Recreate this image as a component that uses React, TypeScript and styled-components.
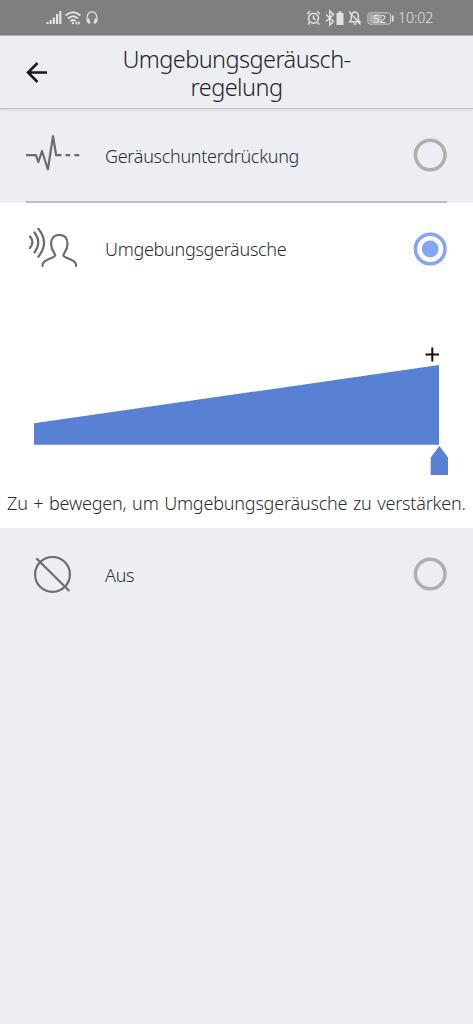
import React, { useState } from "react";
import styled, { createGlobalStyle } from "styled-components";

const GlobalStyle = createGlobalStyle`
  *, *::before, *::after { box-sizing: border-box; }
  body { margin: 0; background: #edeef4; }
`;

const Screen = styled.div`
  display: flex;
  flex-direction: column;
  width: 100%;
  min-height: 100vh;
  background: #edeef4;
  color: #2c2d31;
  font-family: "Noto Sans", "Open Sans", sans-serif;
  font-weight: 300;
`;

const StatusBar = styled.div`
  display: flex;
  align-items: center;
  justify-content: space-between;
  height: 36px;
  padding: 0 38px 0 46px;
  background: #7f7f7f;
  border-bottom: 1px solid #b9b9bb;
`;

const StatusIcons = styled.svg`
  display: block;
  flex: none;
`;

const StatusGroup = styled.div`
  display: flex;
  align-items: center;
  gap: 4px;
`;

const Clock = styled.span`
  color: #e2e2e2;
  font-size: 14.2px;
  line-height: 20px;
  letter-spacing: -0.1px;
  width: 37px;
  white-space: nowrap;
`;

const Header = styled.header`
  display: grid;
  grid-template-columns: 75px 1fr 75px;
  align-items: center;
  height: 73px;
  padding-top: 1px;
  border-bottom: 1px solid #c0c1c5;
  box-shadow: 0 1px 3px rgba(0, 0, 0, 0.1);
`;

const BackButton = styled.button`
  display: flex;
  padding: 0 0 0 26px;
  border: 0;
  background: none;
`;

const Title = styled.h1`
  margin: 0;
  color: #242529;
  font-size: 23.5px;
  font-weight: 300;
  line-height: 28px;
  letter-spacing: -0.57px;
  text-align: center;
  white-space: nowrap;
`;

const Section = styled.section<{ $active?: boolean; $height: number }>`
  height: ${(p) => p.$height}px;
  background: ${(p) => (p.$active ? "#ffffff" : "transparent")};
`;

const Option = styled.button`
  display: grid;
  grid-template-columns: 79px 1fr 34px;
  align-items: center;
  width: 100%;
  height: 92px;
  padding: 0 26px;
  border: 0;
  background: none;
  color: inherit;
  font: inherit;
  text-align: left;
`;

const OptionIcon = styled.svg`
  display: block;
  fill: none;
  stroke: #6c6d70;
  stroke-width: 2.2;
`;

const OptionLabel = styled.span<{ $drop?: number }>`
  padding-top: ${(p) => p.$drop ?? 0}px;
  font-size: 18px;
  line-height: 26px;
  letter-spacing: -0.3px;
  white-space: nowrap;
`;

const RadioMark = styled.svg<{ $checked: boolean }>`
  display: block;
  color: ${(p) => (p.$checked ? "#82a5f5" : "#afafaf")};
  fill: none;
  stroke: currentColor;
  stroke-width: 3.5;
`;

const Divider = styled.hr`
  height: 2px;
  margin: 0 26px;
  border: 0;
  background: #bdbdbf;
`;

const Level = styled.svg`
  display: block;
  margin-top: 45px;
`;

const Caption = styled.p`
  margin: 13px 0 0;
  padding-left: 7px;
  font-size: 18px;
  line-height: 28px;
  letter-spacing: -0.2px;
  word-spacing: 1.15px;
  white-space: nowrap;
`;

const Radio = ({ checked }: { checked: boolean }) => (
  <RadioMark $checked={checked} width="34" height="34" viewBox="0 0 34 34">
    <circle cx="17.200" cy="17" r="14.800" />
    {checked && <circle cx="17.200" cy="17" r="8.400" fill="currentColor" stroke="none" />}
  </RadioMark>
);

const PulseIcon = () => (
  <OptionIcon width="54" height="42" viewBox="0 0 54 42">
    <path d="M0 21.200h9.800l2.600 6.800L16 17l5.900 18.500L27 2l3.200 19.200h5.300M39.500 21.200h4.700M48.300 21.200h5" strokeLinejoin="round" />
  </OptionIcon>
);

const PersonIcon = () => (
  <OptionIcon width="54" height="42" viewBox="0 0 54 42" strokeLinecap="round" strokeLinejoin="round">
    <path d="M4 8.500q4.800 5.700 0 11.500M8.500 4.500q7.500 10 0 20M12.300 0.700q11.500 14 0 28" />
    <path d="M16.500 38c0-3.400 1.300-4.600 5.500-6.500 3.300-1.500 7.300-2.700 7.300-4.300 0-1-4.200-4.700-4.200-11.200 0-6 3-9.100 8.200-9.100s8.200 3.100 8.200 9.100c0 6.500-4.200 10.200-4.200 11.200 0 1.600 4 2.800 7.300 4.300 4.200 1.900 5.500 3.100 5.500 6.500" />
  </OptionIcon>
);

const OffIcon = () => (
  <OptionIcon width="54" height="42" viewBox="0 0 54 42">
    <circle cx="26.500" cy="21.400" r="17.400" />
    <path d="M10.300 5.300l33 32.700" />
  </OptionIcon>
);

const ConnectionIcons = () => (
  <StatusIcons width="54" height="18" viewBox="0 0 54 18" fill="none" stroke="#e2e2e2">
    <path d="M1.500 15v-2M4.700 15v-4M7.900 15V8.500M11.100 15V5M14.300 15V2" strokeWidth="2.200" />
    <path d="M19.500 6.500q7.500-6.500 15 0M22 9.500q5-4.500 10 0M24.500 12q2.500-2 5 0" strokeWidth="1.800" />
    <circle cx="27" cy="14" r="1.200" fill="#e2e2e2" stroke="none" />
    <path d="M31.200 12v4l-2.200-2zM32.200 12v4l2.300-2z" fill="#e2e2e2" stroke="none" />
    <path d="M42.200 13.500C40 11.500 40.500 2.800 46 2.800s6 8.700 3.800 10.700" strokeWidth="1.200" />
    <path d="M42 9.500l1.500 5M50 9.500l-1.500 5" strokeWidth="2.200" />
  </StatusIcons>
);

const DeviceIcons = () => (
  <StatusIcons width="88" height="18" viewBox="0 0 88 18" fill="none" stroke="#e2e2e2" strokeWidth="1.500">
    <circle cx="7.500" cy="9.300" r="5" />
    <path d="M7.500 6.500v3l2.200 1.200M1 5l3-2.700M14 5l-3-2.700M3.500 13.500L2 15.500M11.500 13.500l1.500 2" />
    <path d="M20 5.500l7.500 7-3.700 3.500V2l3.700 3.500-7.500 7" strokeWidth="1.400" />
    <path d="M30.500 4h2V2.300h3V4h2v12h-7z" fill="#e2e2e2" stroke="none" />
    <path d="M43.500 12.700h10.500l-1.700-2.300V7q0-3.500-3.500-4-3.500.500-3.500 4v3.400zM47.500 15h3M43 2.500l11.500 13" strokeWidth="1.400" />
    <rect x="62" y="3.900" width="22.500" height="11.200" rx="2" strokeWidth="1" stroke="#cfcfcf" />
    <rect x="63.500" y="5.200" width="12" height="8.600" rx="1" fill="#b0b0b0" stroke="none" />
    <path d="M86.700 6.500v6" strokeWidth="1.900" />
    <text x="73.500" y="13.700" fill="#e8e8e8" stroke="none" fontSize="11.500" fontWeight="400" textAnchor="middle">
      52
    </text>
  </StatusIcons>
);

type Mode = "cancel" | "ambient" | "off";

export default function App() {
  const [mode, setMode] = useState<Mode>("ambient");

  return (
    <Screen>
      <GlobalStyle />
      <StatusBar>
        <ConnectionIcons />
        <StatusGroup>
          <DeviceIcons />
          <Clock>10:02</Clock>
        </StatusGroup>
      </StatusBar>
      <Header>
        <BackButton aria-label="Zurück">
          <svg width="22" height="22" viewBox="0 0 22 22" fill="none" stroke="#18191c" strokeWidth="2.500">
            <path d="M21 10.500H2.500M11.500 1L2 10.500l9.500 9.500" />
          </svg>
        </BackButton>
        <Title>
          Umgebungsgeräusch-
          <br />
          regelung
        </Title>
      </Header>
      <Section $height={94}>
        <Option onClick={() => setMode("cancel")}>
          <PulseIcon />
          <OptionLabel $drop={2}>Geräuschunterdrückung</OptionLabel>
          <Radio checked={mode === "cancel"} />
        </Option>
        <Divider />
      </Section>
      <Section $active $height={325}>
        <Option onClick={() => setMode("ambient")}>
          <PersonIcon />
          <OptionLabel>Umgebungsgeräusche</OptionLabel>
          <Radio checked={mode === "ambient"} />
        </Option>
        <Level width="473" height="136" viewBox="0 340 473 136">
          <path d="M34 423.300L439 365v79.700H34z" fill="#5881d3" />
          <path d="M439.300 446l8.700 11.500V475h-17.300v-17.500z" fill="#5881d3" />
          <path d="M425.500 354.500H439M432.300 347.500v14" stroke="#111" strokeWidth="2" />
        </Level>
        <Caption>Zu + bewegen, um Umgebungsgeräusche zu verstärken.</Caption>
      </Section>
      <Section $height={92}>
        <Option onClick={() => setMode("off")}>
          <OffIcon />
          <OptionLabel $drop={2}>Aus</OptionLabel>
          <Radio checked={mode === "off"} />
        </Option>
      </Section>
    </Screen>
  );
}
